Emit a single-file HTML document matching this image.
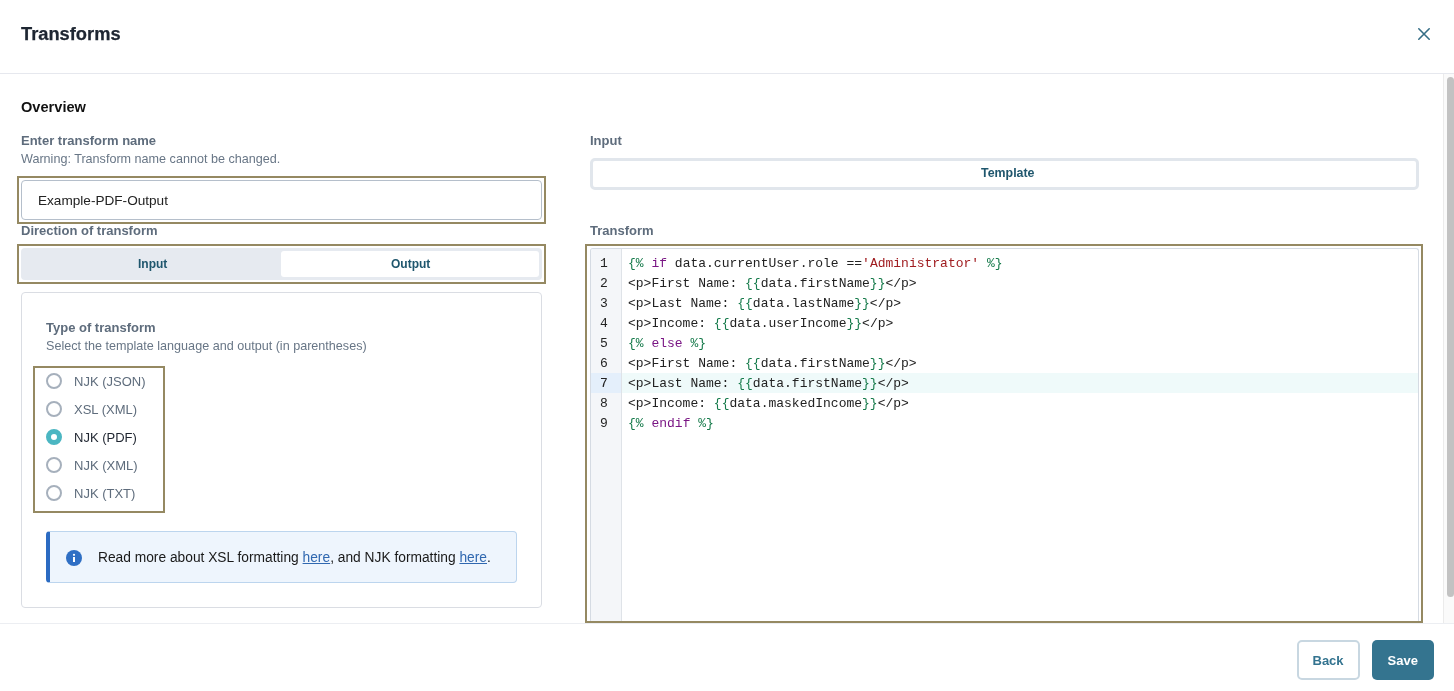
<!DOCTYPE html>
<html><head><meta charset="utf-8">
<style>
*{box-sizing:border-box;margin:0;padding:0}
html,body{width:1454px;height:691px;overflow:hidden;background:#fff;font-family:"Liberation Sans",sans-serif}
.a{position:absolute}
.wrap{position:absolute;left:0;top:0;width:1454px;height:691px;will-change:transform}
.t{white-space:nowrap;line-height:1}
.hdr-line{left:0;top:73px;width:1454px;height:1px;background:#e6e8ee}
.ftr-line{left:0;top:623px;width:1454px;height:1px;background:#eceef2}
.title{left:21px;top:25px;font-size:18.3px;font-weight:bold;color:#1e2632;-webkit-text-stroke:0.25px #1e2632}
.lbl{font-size:13px;font-weight:bold;color:#5e6c7c}
.sub{font-size:12.6px;color:#687686}
.gold{border:2px solid #958962}
.inp{left:21px;top:180px;width:521px;height:40px;border:1px solid #b5bfcb;border-radius:4px;background:#fff}
.seg{left:21px;top:248px;width:521px;height:32px;background:#e6eaf0;border-radius:4px}
.pill{left:281px;top:251px;width:258px;height:26px;background:#fff;border-radius:3px}
.segtxt{font-size:12px;font-weight:bold;color:#1f566d}
.card{left:21px;top:292px;width:521px;height:316px;border:1px solid #dadde3;border-radius:4px}
.radio{width:16px;height:16px;border-radius:50%;border:2px solid #a6b0bc;background:#fff}
.radio.on{border:5px solid #4bb6c2}
.rl{font-size:13px;color:#5e6c7c}
.info{left:46px;top:531px;width:471px;height:52px;background:#eef5fd;border:1px solid #bcd5ee;border-left:4px solid #2b6bc2;border-radius:4px}
.link{color:#3068b0;text-decoration:underline}
.tmpl{left:590px;top:158px;width:829px;height:32px;border:3px solid #e1e6ec;border-radius:5px}
.ed{left:590px;top:248px;width:829px;height:373px;border:1px solid #d5dbe3;border-bottom:0;border-radius:3px 3px 0 0;overflow:hidden;background:#fff}
.gut{left:0;top:0;width:31px;height:100%;background:#f4f6f9;border-right:1px solid #dfe3e8}
.code{font-family:"Liberation Mono",monospace;font-size:13px;line-height:20px;color:#222}
.g{color:#157a4a}.k{color:#7a1684}.s{color:#a01c20}
.btn{height:40px;border-radius:5px;font-size:13px;font-weight:bold}
</style></head><body>
<div class="wrap">
<!-- header -->
<div class="a t title">Transforms</div>
<svg class="a" style="left:1416px;top:26px" width="16" height="16" viewBox="0 0 16 16"><path d="M2.8 2.8L13.2 13.2M13.2 2.8L2.8 13.2" stroke="#356e86" stroke-width="1.6" stroke-linecap="round"/></svg>
<div class="a hdr-line"></div>

<!-- left column -->
<div class="a t" style="left:21px;top:100px;font-size:14.6px;font-weight:bold;color:#111">Overview</div>
<div class="a t lbl" style="left:21px;top:134px">Enter transform name</div>
<div class="a t sub" style="left:21px;top:153px">Warning: Transform name cannot be changed.</div>
<div class="a gold" style="left:17px;top:176px;width:529px;height:48px"></div>
<div class="a inp"></div>
<div class="a t" style="left:38px;top:194px;font-size:13.6px;color:#222">Example-PDF-Output</div>
<div class="a t lbl" style="left:21px;top:224px">Direction of transform</div>
<div class="a gold" style="left:17px;top:244px;width:529px;height:40px"></div>
<div class="a seg"></div>
<div class="a pill"></div>
<div class="a t segtxt" style="left:138px;top:258px">Input</div>
<div class="a t segtxt" style="left:391px;top:258px">Output</div>

<div class="a card"></div>
<div class="a t lbl" style="left:46px;top:321px">Type of transform</div>
<div class="a t sub" style="left:46px;top:340px">Select the template language and output (in parentheses)</div>
<div class="a gold" style="left:33px;top:366px;width:132px;height:147px"></div>
<div class="a radio" style="left:46px;top:373px"></div>
<div class="a radio" style="left:46px;top:401px"></div>
<div class="a radio on" style="left:46px;top:429px"></div>
<div class="a radio" style="left:46px;top:457px"></div>
<div class="a radio" style="left:46px;top:485px"></div>
<div class="a t rl" style="left:74px;top:375px">NJK (JSON)</div>
<div class="a t rl" style="left:74px;top:403px">XSL (XML)</div>
<div class="a t rl" style="left:74px;top:431px;color:#1f2530">NJK (PDF)</div>
<div class="a t rl" style="left:74px;top:459px">NJK (XML)</div>
<div class="a t rl" style="left:74px;top:487px">NJK (TXT)</div>

<div class="a info"></div>
<svg class="a" style="left:66px;top:550px" width="16" height="16" viewBox="0 0 16 16"><circle cx="8" cy="8" r="8" fill="#2f6fc4"/><rect x="7" y="7" width="2" height="5" fill="#fff"/><circle cx="8" cy="4.8" r="1.1" fill="#fff"/></svg>
<div class="a t" style="left:98px;top:551px;font-size:13.78px;color:#1a1a1a">Read more about XSL formatting <span class="link">here</span>, and NJK formatting <span class="link">here</span>.</div>

<!-- right column -->
<div class="a t lbl" style="left:590px;top:134px">Input</div>
<div class="a tmpl"></div>
<div class="a t segtxt" style="left:981px;top:167px;font-size:12.4px">Template</div>
<div class="a t lbl" style="left:590px;top:224px">Transform</div>
<div class="a gold" style="left:585px;top:244px;width:838px;height:379px"></div>
<div class="a ed">
  <div class="a gut"></div>
  <div class="a" style="left:0;top:124px;width:30px;height:20px;background:#e4effb"></div>
  <div class="a" style="left:31px;top:124px;width:800px;height:20px;background:#effafa"></div>
  <div class="a code" style="left:0;top:5px;width:26px;text-align:center">1<br>2<br>3<br>4<br>5<br>6<br>7<br>8<br>9</div>
  <div class="a code" style="left:37px;top:5px;white-space:pre"><span class="g">{%</span> <span class="k">if</span> data.currentUser.role ==<span class="s">'Administrator'</span> <span class="g">%}</span>
&lt;p&gt;First Name: <span class="g">{{</span>data.firstName<span class="g">}}</span>&lt;/p&gt;
&lt;p&gt;Last Name: <span class="g">{{</span>data.lastName<span class="g">}}</span>&lt;/p&gt;
&lt;p&gt;Income: <span class="g">{{</span>data.userIncome<span class="g">}}</span>&lt;/p&gt;
<span class="g">{%</span> <span class="k">else</span> <span class="g">%}</span>
&lt;p&gt;First Name: <span class="g">{{</span>data.firstName<span class="g">}}</span>&lt;/p&gt;
&lt;p&gt;Last Name: <span class="g">{{</span>data.firstName<span class="g">}}</span>&lt;/p&gt;
&lt;p&gt;Income: <span class="g">{{</span>data.maskedIncome<span class="g">}}</span>&lt;/p&gt;
<span class="g">{%</span> <span class="k">endif</span> <span class="g">%}</span></div>
</div>

<!-- scrollbar -->
<div class="a" style="left:1443px;top:74px;width:11px;height:549px;background:#fafafa;border-left:1px solid #ebebeb"></div>
<div class="a" style="left:1447px;top:77px;width:7px;height:520px;background:#c2c2c2;border-radius:4px"></div>

<!-- footer -->
<div class="a ftr-line"></div>
<div class="a btn" style="left:1297px;top:640px;width:63px;border:2px solid #c8d7e1;background:#fff"></div>
<div class="a t" style="left:1312.5px;top:653.5px;font-size:13px;font-weight:bold;color:#33738f">Back</div>
<div class="a btn" style="left:1372px;top:640px;width:62px;background:#34748f"></div>
<div class="a t" style="left:1387.5px;top:653.5px;font-size:13px;font-weight:bold;color:#fff">Save</div>
</div>
</body></html>
